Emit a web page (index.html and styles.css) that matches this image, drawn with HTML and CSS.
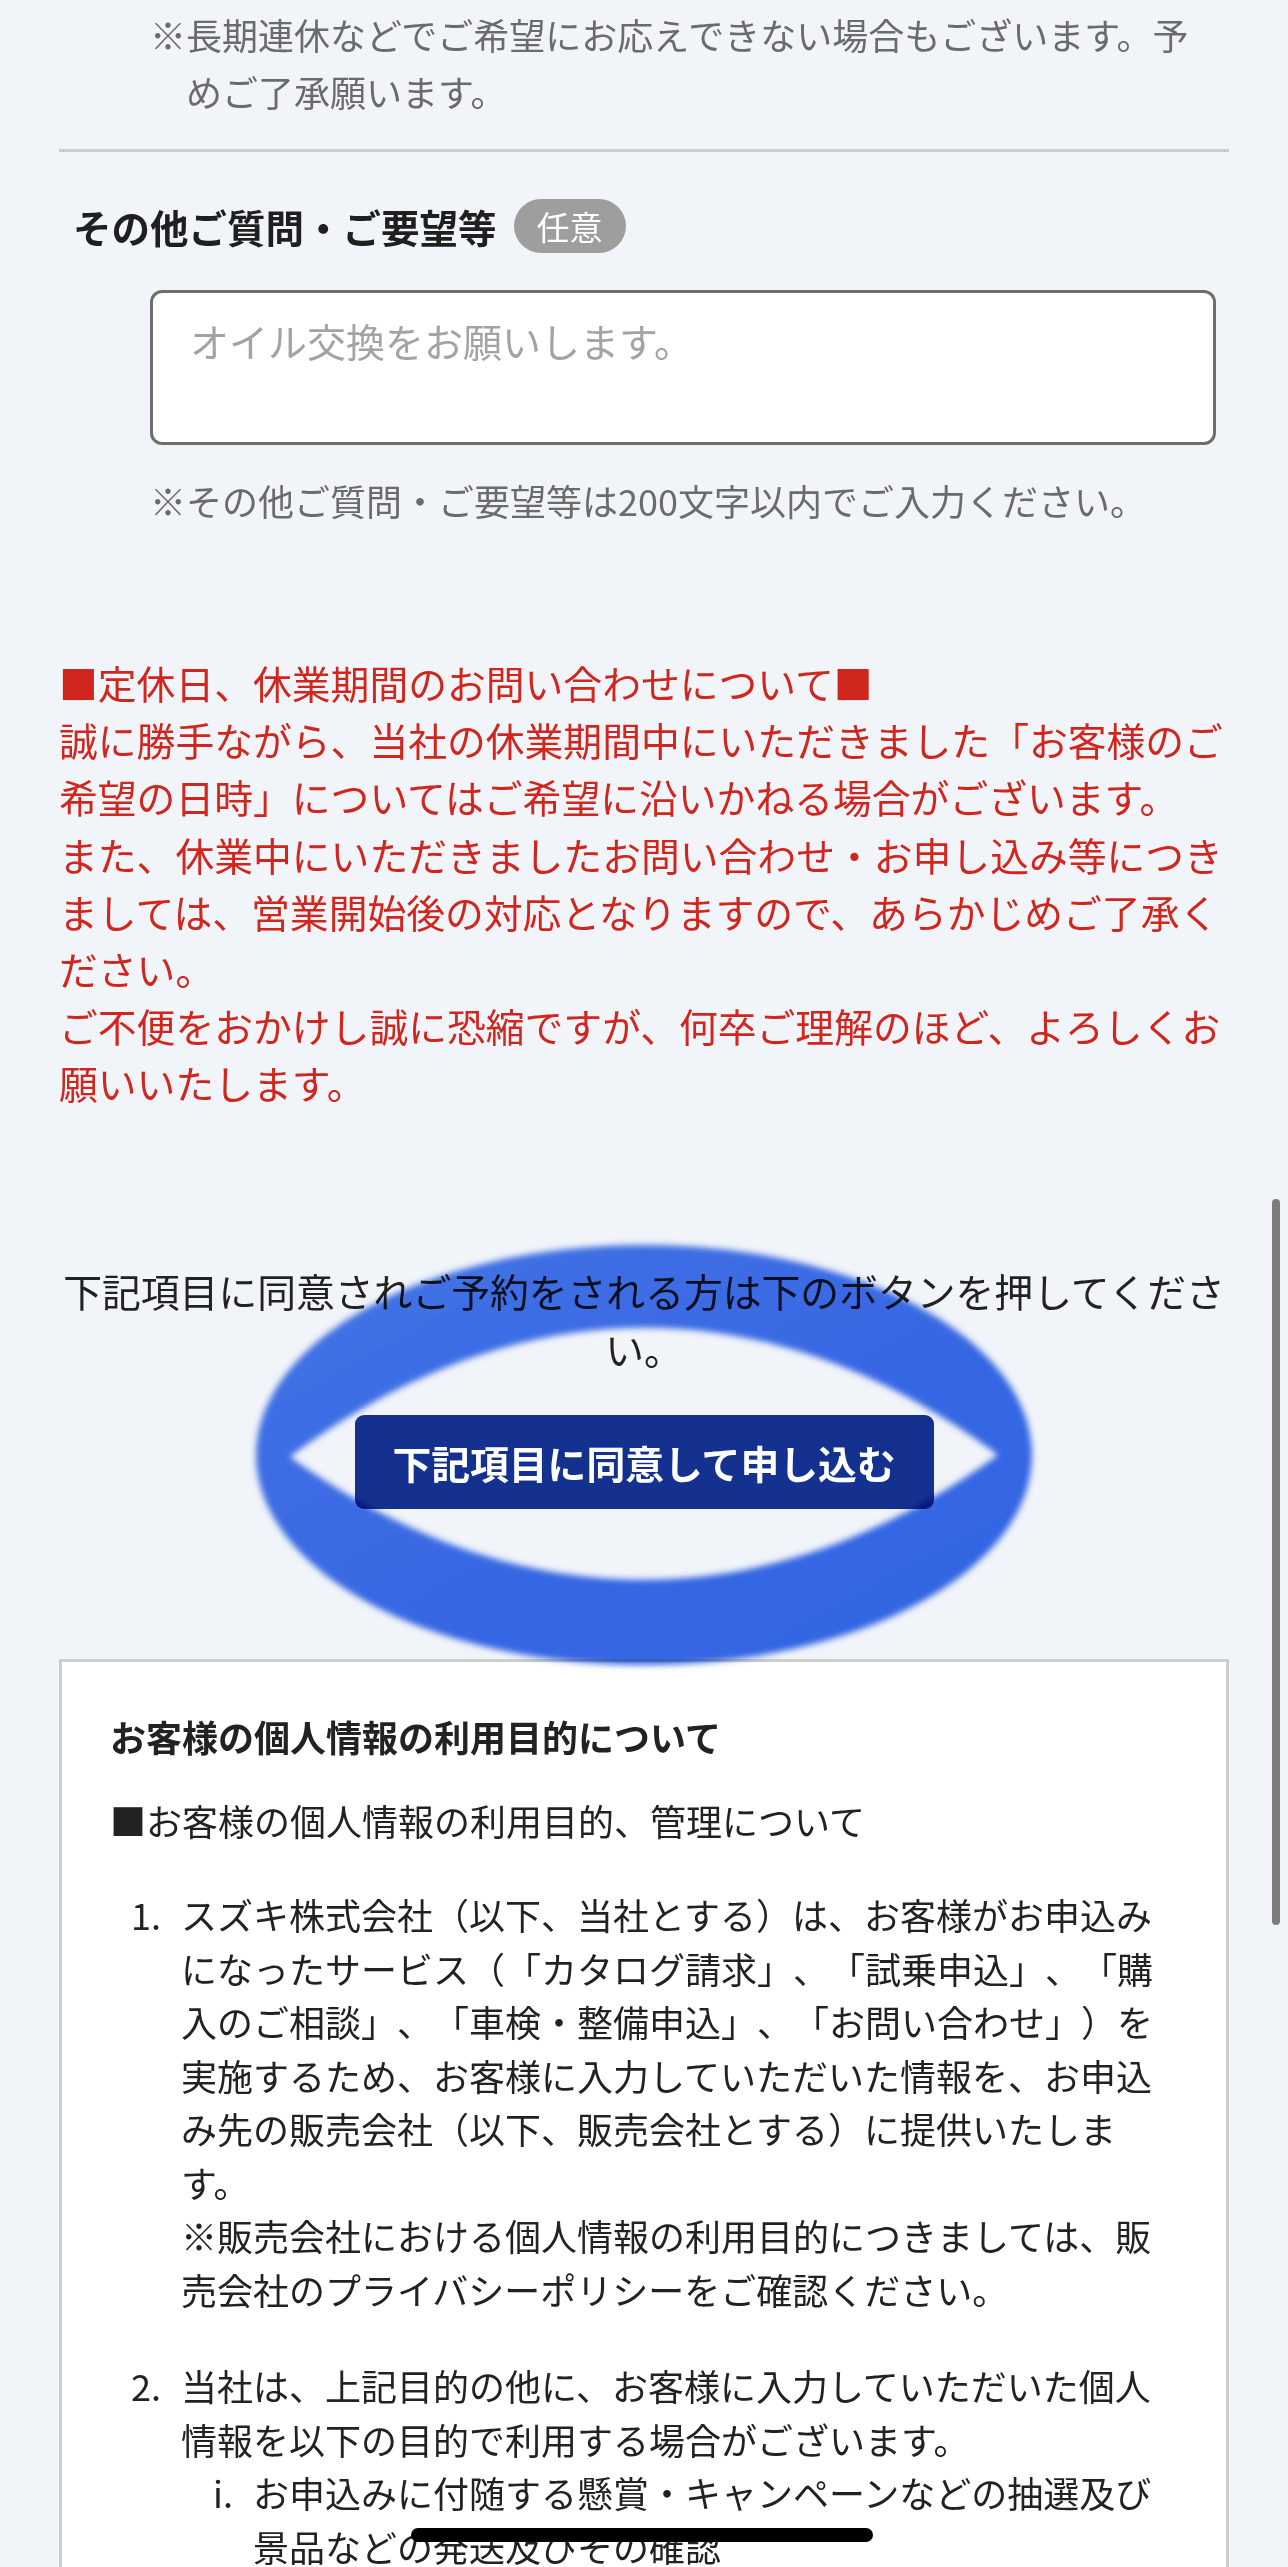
FILE: index.html
```html
<!DOCTYPE html>
<html lang="ja">
<head>
<meta charset="utf-8">
<title>お問い合わせ</title>
<link rel="stylesheet" href="styles.css">
</head>
<body>
<div class="page">
  <div class="field">
    <p class="note hang">※長期連休などでご希望にお応えできない場合もございます。予めご了承願います。</p>
  </div>
  <hr class="divider">
  <section class="item">
    <div class="item-head">
      <h2 class="item-title">その他ご質問・ご要望等</h2>
      <span class="badge">任意</span>
    </div>
    <div class="field">
      <textarea class="textarea" placeholder="オイル交換をお願いします。"></textarea>
      <p class="note hang note-after">※その他ご質問・ご要望等は200文字以内でご入力ください。</p>
    </div>
  </section>

  <div class="notice">■定休日、休業期間のお問い合わせについて■<br>誠に勝手ながら、当社の休業期間中にいただきました「お客様のご希望の日時」についてはご希望に沿いかねる場合がございます。<br>また、休業中にいただきましたお問い合わせ・お申し込み等につきましては、営業開始後の対応となりますので、あらかじめご了承ください。<br>ご不便をおかけし誠に恐縮ですが、何卒ご理解のほど、よろしくお願いいたします。</div>

  <div class="cta">
    <p class="cta-text">下記項目に同意されご予約をされる方は下のボタンを押してください。</p>
    <button class="cta-btn" type="button">下記項目に同意して申し込む</button>
  </div>

  <div class="policy">
    <p class="policy-title">お客様の個人情報の利用目的について</p>
    <p class="policy-lead">■お客様の個人情報の利用目的、管理について</p>
    <ol class="plist">
      <li><span class="pnum">1.</span><div class="ptext">スズキ株式会社（以下、当社とする）は、お客様がお申込みになったサービス（「カタログ請求」、「試乗申込」、「購入のご相談」、「車検・整備申込」、「お問い合わせ」）を実施するため、お客様に入力していただいた情報を、お申込み先の販売会社（以下、販売会社とする）に提供いたします。<br>※販売会社における個人情報の利用目的につきましては、販売会社のプライバシーポリシーをご確認ください。</div></li>
      <li><span class="pnum">2.</span><div class="ptext">当社は、上記目的の他に、お客様に入力していただいた個人情報を以下の目的で利用する場合がございます。
        <ol class="sublist">
          <li><span class="pnum sub">i.</span><div class="ptext">お申込みに付随する懸賞・キャンペーンなどの抽選及び景品などの発送及びその確認</div></li>
        </ol>
      </div></li>
    </ol>
  </div>

  <svg class="ring" viewBox="0 0 900 520" width="900" height="520" aria-hidden="true">
    <defs>
      <filter id="soft" x="-5%" y="-5%" width="110%" height="110%">
        <feGaussianBlur stdDeviation="3"/>
      </filter>
      <linearGradient id="ringfill" x1="0" y1="0" x2="1" y2="1">
        <stop offset="0" stop-color="#4778ea"/>
        <stop offset="0.55" stop-color="#3a6ce9"/>
        <stop offset="1" stop-color="#3469e8"/>
      </linearGradient>
    </defs>
    <path filter="url(#soft)" fill="url(#ringfill)" fill-rule="evenodd"
      d="M56,255 A388,210 0 1,0 832,255 A388,210 0 1,0 56,255 Z
         M90,257 C319,85 569,85 798,255 C569,421 319,421 90,257 Z"/>
  </svg>
</div>
<div class="scrollbar"></div>
<div class="home-indicator"></div>
</body>
</html>
```

FILE: styles.css
```css
html {
  overflow: hidden;
}

body {
  margin: 0;
  position: relative;
  background: #f1f4f9;
  color: #222;
  font-family: "Noto Sans CJK JP", "Noto Sans", sans-serif;
  text-spacing-trim: space-all;
}

.page {
  position: relative;
  padding: 6px 59px 0;
}

.field {
  margin: 0 13px 0 91px;
}

.note {
  margin: 0;
  font-size: 36px;
  line-height: 57px;
  color: #6b6b6b;
}

.hang {
  padding-left: 1em;
  text-indent: -1em;
}

.note-after {
  margin-top: 27px;
}

.divider {
  border: 0;
  height: 3px;
  background: #cbccd0;
  margin: 29px 0 0;
}

.item-head {
  display: flex;
  align-items: center;
  margin-top: 47px;
  padding-left: 14px;
}

.item-title {
  margin: 0;
  font-size: 38.5px;
  line-height: 54px;
  font-weight: 700;
  color: #1f1f1f;
}

.badge {
  margin-left: 17px;
  height: 54px;
  line-height: 54px;
  padding: 0 23px;
  border-radius: 27px;
  background: #9e9e9e;
  color: #fff;
  font-size: 33px;
}

.textarea {
  display: block;
  box-sizing: border-box;
  width: 100%;
  height: 155px;
  margin: 37px 0 0;
  border: 3px solid #6e6e6e;
  border-radius: 12px;
  padding: 20px 37px;
  font-family: inherit;
  font-size: 39px;
  line-height: 54px;
  color: #222;
  background: #fff;
  resize: none;
  outline: none;
}

.textarea::placeholder {
  color: #a3a3a3;
}

.notice {
  margin-top: 125px;
  color: #d0261d;
  font-size: 38.8px;
  line-height: 57.2px;
}

.cta {
  margin-top: 149.5px;
  text-align: center;
}

.cta-text {
  margin: 0;
  font-size: 38.8px;
  line-height: 58px;
  color: #222;
}

.cta-btn {
  display: inline-block;
  margin-top: 38px;
  width: 579px;
  height: 94px;
  padding: 0;
  border: 0;
  border-radius: 9px;
  background: #15318f;
  color: #fff;
  font-family: inherit;
  font-size: 38.8px;
  font-weight: 700;
  line-height: 54px;
}

.policy {
  margin-top: 150px;
  background: #fff;
  border: 3px solid #cdcdcd;
  padding: 47px 48px 60px;
  color: #222;
}

.policy-title {
  margin: 0;
  font-size: 36px;
  line-height: 54px;
  font-weight: 700;
}

.policy-lead {
  margin: 30px 0 0;
  font-size: 36px;
  line-height: 54px;
}

.plist {
  list-style: none;
  margin: 41px 0 0;
  padding: 0;
  font-size: 36px;
  line-height: 53.5px;
}

.plist > li {
  display: flex;
  margin-bottom: 43px;
}

.pnum {
  flex: 0 0 71px;
  box-sizing: border-box;
  padding-left: 21px;
}

.pnum.sub {
  flex-basis: 72px;
  padding-left: 32px;
}

.ptext {
  flex: 1;
  min-width: 0;
}

.sublist {
  list-style: none;
  margin: 0;
  padding: 0;
}

.sublist > li {
  display: flex;
}

.ring {
  position: absolute;
  left: 200px;
  top: 1200px;
  mix-blend-mode: multiply;
  pointer-events: none;
}

.scrollbar {
  position: absolute;
  left: 1272px;
  top: 1199px;
  width: 8px;
  height: 726px;
  border-radius: 4px;
  background: #7d7d7d;
}

.home-indicator {
  position: absolute;
  left: 411px;
  top: 2528px;
  width: 462px;
  height: 14px;
  border-radius: 7px;
  background: #000;
}
```
